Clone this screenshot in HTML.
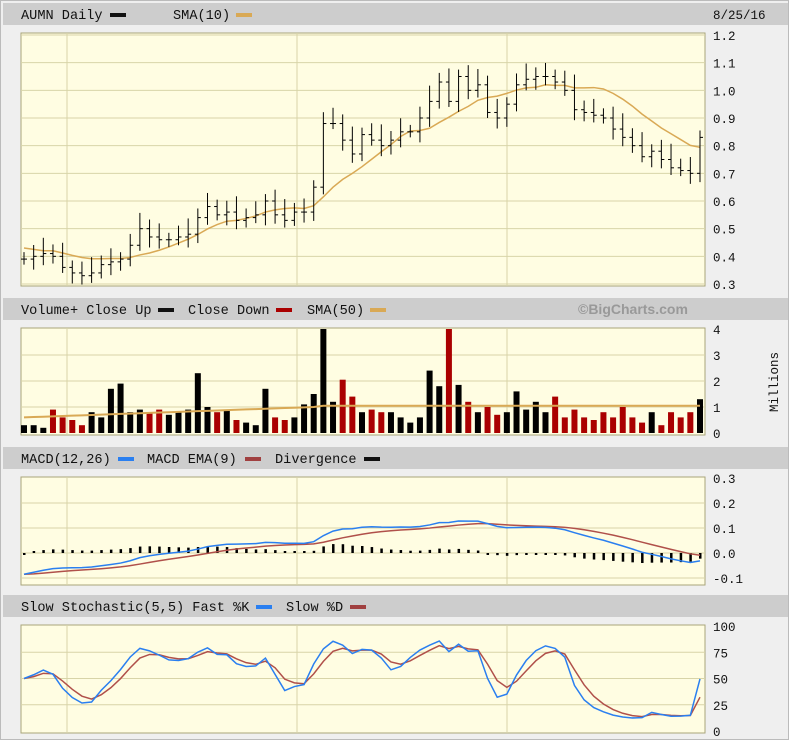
<!DOCTYPE html><html><head><meta charset="utf-8"><style>
body{margin:0;background:#efefef;width:789px;height:740px;overflow:hidden}
svg{display:block}
</style></head><body>
<svg id="s" width="789" height="740" xmlns="http://www.w3.org/2000/svg" font-family="Liberation Mono, DejaVu Sans Mono, monospace" font-size="13.6">
<rect x="0" y="0" width="789" height="740" fill="#efefef"/>
<rect x="0.5" y="0.5" width="788" height="739" fill="none" stroke="#bbb"/>
<g fill="#cdcdcd">
<rect x="3" y="3" width="785" height="22"/><rect x="3" y="298" width="785" height="22"/>
<rect x="3" y="447" width="785" height="22"/><rect x="3" y="595" width="785" height="22"/></g>
<g fill="#111">
<text x="21" y="19">AUMN Daily</text><rect x="110" y="13" width="16" height="4"/>
<text x="173" y="19">SMA(10)</text><rect x="236" y="13" width="16" height="4" fill="#d9a955"/>
<text x="713" y="19" font-size="12.5">8/25/16</text>
<text x="21" y="314">Volume+ Close Up</text><rect x="158" y="308" width="16" height="4"/>
<text x="188" y="314">Close Down</text><rect x="276" y="308" width="16" height="4" fill="#a00"/>
<text x="307" y="314">SMA(50)</text><rect x="370" y="308" width="16" height="4" fill="#d9a955"/>
<text x="578" y="314" fill="#999" font-family="Liberation Sans, sans-serif" font-weight="bold" font-size="14">©BigCharts.com</text>
<text x="21" y="463">MACD(12,26)</text><rect x="118" y="457" width="16" height="4" fill="#2a7ff0"/>
<text x="147" y="463">MACD EMA(9)</text><rect x="245" y="457" width="16" height="4" fill="#a04040"/>
<text x="275" y="463">Divergence</text><rect x="364" y="457" width="16" height="4"/>
<text x="21" y="611">Slow Stochastic(5,5) Fast %K</text><rect x="256" y="605" width="16" height="4" fill="#2a7ff0"/>
<text x="286" y="611">Slow %D</text><rect x="350" y="605" width="16" height="4" fill="#a04040"/>
</g>
<g id="panes" font-size="12.5"></g>
</svg>
<script>
const NS="http://www.w3.org/2000/svg",g=document.getElementById("panes");
function el(t,a){const e=document.createElementNS(NS,t);for(const k in a)e.setAttribute(k,a[k]);g.appendChild(e);return e}
function pane(y0,y1,grid,labels,lx){
 el("rect",{x:21,y:y0,width:684,height:y1-y0,fill:"#fffde2",stroke:"#a9a57a"});
 grid.forEach(y=>el("line",{x1:21,x2:705,y1:y,y2:y,stroke:"#d8d4a8"}));
 [67,297,507].forEach(x=>el("line",{x1:x,x2:x,y1:y0,y2:y1,stroke:"#d8d4a8"}));
 labels.forEach(([t,y])=>{const e=el("text",{x:lx||713,y:y+5,fill:"#111"});e.textContent=t});
}
const C=[0.39,0.40,0.41,0.40,0.36,0.34,0.33,0.34,0.37,0.38,0.39,0.44,0.50,0.47,0.46,0.46,0.47,0.48,0.54,0.58,0.55,0.56,0.53,0.54,0.55,0.60,0.55,0.53,0.56,0.56,0.65,0.88,0.88,0.82,0.77,0.84,0.82,0.80,0.82,0.85,0.85,0.90,0.96,1.03,0.96,1.05,1.00,1.02,0.92,0.90,0.95,1.02,1.04,1.05,1.05,1.03,1.00,0.93,0.92,0.91,0.90,0.86,0.83,0.80,0.76,0.78,0.75,0.72,0.71,0.70,0.83];
const N=C.length,X=i=>24+i*(676/(N-1));
const py=p=>35+(1.2-p)/0.9*249;
const pg=[],pl=[];for(let k=0;k<10;k++){const p=1.2-k*0.1;pg.push(py(p));pl.push([p.toFixed(1),py(p)])}
pane(33,286,pg,pl);
const sma=C.map((c,i)=>{const s=C.slice(Math.max(0,i-9),i+1);return s.reduce((a,b)=>a+b)/s.length+0.02});
sma[0]=0.43;sma[1]=0.425;sma[2]=0.42;
el("polyline",{points:sma.map((v,i)=>X(i)+","+py(v)).join(" "),fill:"none",stroke:"#d9a955","stroke-width":1.5});
C.forEach((c,i)=>{const o=i?C[i-1]:c,h=Math.max(o,c)+0.025+((i*7)%5)*0.008,l=Math.min(o,c)-0.02-((i*3)%4)*0.006,x=X(i);
 el("line",{x1:x,x2:x,y1:py(h),y2:py(l),stroke:"#000"});el("line",{x1:x-3,x2:x,y1:py(o),y2:py(o),stroke:"#000"});el("line",{x1:x,x2:x+3,y1:py(c),y2:py(c),stroke:"#000"})});
const vy=v=>433-v*26;
pane(328,435,[vy(1),vy(2),vy(3)],[["4",vy(4)],["3",vy(3)],["2",vy(2)],["1",vy(1)],["0",vy(0)]]);
const vt=el("text",{x:0,y:0,fill:"#111",transform:"translate(778,412) rotate(-90)"});vt.textContent="Millions";
const V=[0.3,0.3,0.2,0.9,0.6,0.5,0.3,0.8,0.6,1.7,1.9,0.8,0.9,0.8,0.9,0.7,0.8,0.9,2.3,1.0,0.8,0.9,0.5,0.4,0.3,1.7,0.6,0.5,0.6,1.1,1.5,4.0,1.2,2.05,1.4,0.8,0.9,0.8,0.8,0.6,0.4,0.6,2.4,1.8,4.0,1.85,1.2,0.8,1.0,0.7,0.8,1.6,0.9,1.2,0.8,1.4,0.6,0.9,0.6,0.5,0.8,0.6,1.0,0.6,0.4,0.8,0.3,0.8,0.6,0.8,1.3];
C.forEach((c,i)=>{const up=!i||c>=C[i-1];el("rect",{x:X(i)-3,y:vy(V[i]),width:6,height:V[i]*26,fill:up?"#000":"#a00"})});
el("polyline",{points:V.map((v,i)=>X(i)+","+vy(0.6+Math.min(1,i/30)*0.4+(i>30?0.05:0))).join(" "),fill:"none",stroke:"#d9a955","stroke-width":2});
const my=m=>553-m*250;
pane(477,585,[my(0.2),my(0.1),my(0),my(-0.1)],[["0.3",my(0.3)],["0.2",my(0.2)],["0.1",my(0.1)],["0.0",my(0)],["-0.1",my(-0.1)]]);
function ema(a,n){const k=2/(n+1);let r=[],e=a[0];a.forEach(v=>{e=v*k+e*(1-k);r.push(e)});return r}
const e12=ema(C,12),e26=ema(C,26),m=C.map((c,i)=>(e12[i]-e26[i])*1.05-0.09*Math.exp(-i/12)+0.005);
const sg=ema(m,9);
m.forEach((v,i)=>{const d=(v-sg[i]);const h=Math.max(2,Math.min(10,Math.abs(d)*250));el("rect",{x:X(i)-1,y:my(0)-(d>0?h:0),width:2.5,height:h,fill:"#000"})});
el("polyline",{points:sg.map((v,i)=>X(i)+","+my(v)).join(" "),fill:"none",stroke:"#b0504a","stroke-width":1.5});
el("polyline",{points:m.map((v,i)=>X(i)+","+my(v)).join(" "),fill:"none",stroke:"#2a7ff0","stroke-width":1.5});
const sy=v=>731-v*1.05;
pane(625,733,[sy(75),sy(50),sy(25)],[["100",sy(100)],["75",sy(75)],["50",sy(50)],["25",sy(25)],["0",sy(0)]]);
const K=C.map((c,i)=>{const s=C.slice(Math.max(0,i-7),i+1),hi=Math.max(...s)+0.03,lo=Math.min(...s)-0.03;return (c-lo)/(hi-lo)*100});
const Ks=ema(K,3),D=ema(Ks,3);
el("polyline",{points:D.map((v,i)=>X(i)+","+sy(v)).join(" "),fill:"none",stroke:"#b0504a","stroke-width":1.5});
el("polyline",{points:Ks.map((v,i)=>X(i)+","+sy(v)).join(" "),fill:"none",stroke:"#2a7ff0","stroke-width":1.5});
</script>
</body></html>
